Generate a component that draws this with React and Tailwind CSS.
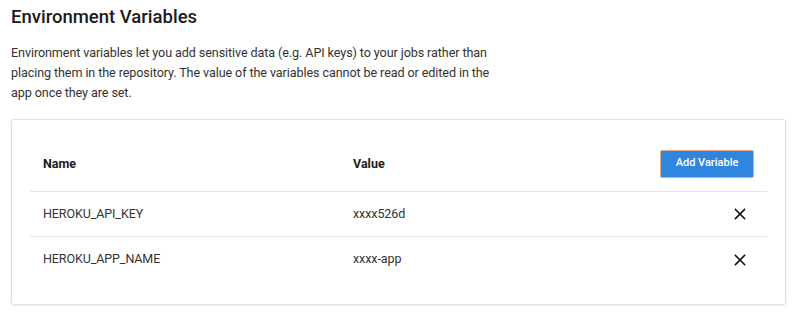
import React from "react";

const rows = [
  { name: "HEROKU_API_KEY", value: "xxxx526d" },
  { name: "HEROKU_APP_NAME", value: "xxxx-app" },
];

function XIcon() {
  return (
    <svg width="12" height="12" viewBox="0 0 12 12" fill="none" stroke="#111" strokeWidth="1.6" strokeLinecap="square">
      <path d="M1.5 1.5 L10.5 10.5 M10.5 1.5 L1.5 10.5" />
    </svg>
  );
}

export default function App() {
  return (
    <div className="w-[800px] h-[320px] bg-white text-[#212121] font-['Roboto',sans-serif] px-[11px] pt-[4px]">
      <h1 className="text-[18.5px] font-medium leading-[26px] text-[#1a1a1a]">Environment Variables</h1>
      <p className="mt-[13px] w-[495px] text-[12.6px] tracking-[-0.1px] leading-[20px] text-[#333]">
        Environment variables let you add sensitive data (e.g. API keys) to your jobs rather than placing them in the repository. The value of the variables cannot be read or edited in the app once they are set.
      </p>
      <div className="mt-[16px] w-[775px] border border-[#e0e0e0] rounded-[3px] shadow-[0_1px_3px_rgba(0,0,0,0.08)] pt-[16px] pb-[22px] px-[18px]">
        <div className="grid grid-cols-[310px_1fr_auto] items-center h-[56px] border-b border-[#e6e6e6] px-[13px]">
          <div className="text-[12.5px] font-bold text-[#1a1a1a] pt-[1px]">Name</div>
          <div className="text-[12.5px] font-bold text-[#1a1a1a] pt-[1px]">Value</div>
          <button className="w-[94px] h-[28px] rounded-[2px] bg-[#2f86de] border border-[#e6a58c] text-white text-[11px] font-medium">
            Add Variable
          </button>
        </div>
        {rows.map((r, i) => (
          <div
            key={r.name}
            className={`grid grid-cols-[310px_1fr_auto] items-center h-[45px] px-[13px] ${i === 0 ? "border-b border-[#e6e6e6]" : ""}`}
          >
            <div className="text-[12.5px] tracking-[-0.1px] text-[#333]">{r.name}</div>
            <div className="text-[12.5px] tracking-[-0.1px] text-[#333]">{r.value}</div>
            <div className="w-[94px] flex justify-end pr-[8px]">
              <XIcon />
            </div>
          </div>
        ))}
      </div>
    </div>
  );
}
